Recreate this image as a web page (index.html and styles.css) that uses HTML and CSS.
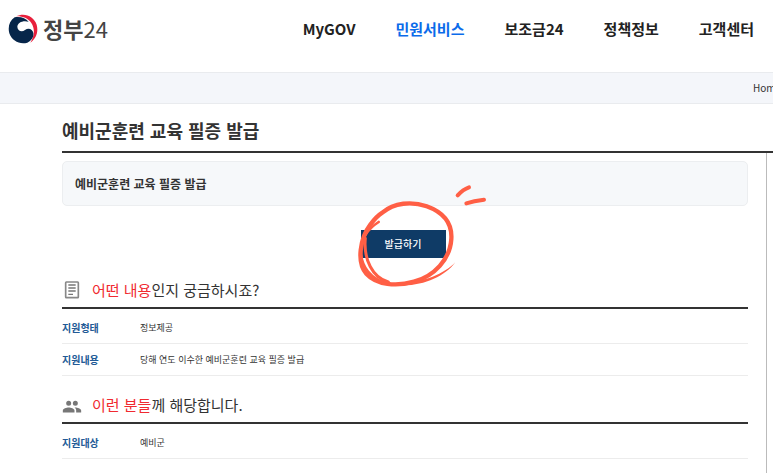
FILE: index.html
```html
<!DOCTYPE html>
<html lang="ko">
<head>
    <meta charset="UTF-8">
    <meta name="viewport" content="width=device-width, initial-scale=1.0">
    <title>예비군훈련 교육 필증 발급 | 정부24</title>
    <link rel="stylesheet" href="styles.css">
</head>
<body>
    <header class="header">
        <a href="#" class="logo">
            <svg class="logo-mark" viewBox="0 0 90 90" aria-hidden="true">
                <path fill="#e8203c" d="M24 7 C50 -6 78 7 86 32 C92 54 84 74 67 86 C79 68 82 45 70 27 C60 12 42 6 24 7Z"/>
                <path fill="#06264a" d="M20 10 C37 7 53 12 62 23 C45 18 29 25 28 38 C28 50 41 56 51 48 C61 40 74 45 76 57 C78 70 69 81 58 86 C36 93 12 81 4 58 C-1 39 4 21 20 10Z"/>
            </svg>
            <span><b>정부</b>24</span>
        </a>
        <nav class="menu">
            <a href="#">MyGOV</a>
            <a href="#" class="active">민원서비스</a>
            <a href="#">보조금24</a>
            <a href="#">정책정보</a>
            <a href="#">고객센터</a>
        </nav>
    </header>
    <div class="breadcrumb">
        <a href="#">Home</a>
    </div>
    <main class="page">
        <h1>예비군훈련 교육 필증 발급</h1>
        <div class="content">
            <div class="summary">예비군훈련 교육 필증 발급</div>
            <div class="action">
                <div class="action-target">
                    <button type="button">발급하기</button>
                    <svg class="marker" viewBox="0 0 480 375" aria-hidden="true">
                        <g fill="none" stroke="#ff5f45" stroke-linecap="round" stroke-linejoin="round">
                            <path stroke-width="13" d="M127 128 C162 98 215 93 260 109 C307 126 337 158 334 207 C330 268 283 318 222 335 C169 350 110 345 79 311 C49 277 60 205 91 164 C102 149 114 136 127 128"/>
                            <path stroke-width="8" d="M116 156 C83 177 65 207 63 239 C61 286 91 333 153 343"/>
                            <path stroke-width="9" d="M76 205 C70 268 98 324 145 336"/>
                            <path stroke-width="12" d="M353 76 C362 66 373 57 387 52"/>
                            <path stroke-width="12" d="M379 100 C397 94 415 91 432 89"/>
                        </g>
                        <path fill="#ff5f45" d="M346 277 C316 318 256 345 190 347 L188 338 C251 337 312 312 346 277Z"/>
                    </svg>
                </div>
            </div>
            <section>
                <h2>
                    <svg class="icon" viewBox="0 0 60 60" aria-hidden="true">
                        <rect x="11" y="6" width="38" height="47" rx="2" fill="none" stroke="#888" stroke-width="5"/>
                        <path fill="none" stroke="#777" stroke-width="4" d="M19 15H41M19 24H41M19 33H41M19 43H33"/>
                    </svg>
                    <span><em>어떤 내용</em>인지 궁금하시죠?</span>
                </h2>
                <table>
                    <tr>
                        <th scope="row">지원형태</th>
                        <td>정보제공</td>
                    </tr>
                    <tr>
                        <th scope="row">지원내용</th>
                        <td>당해 연도 이수한 예비군훈련 교육 필증 발급</td>
                    </tr>
                </table>
            </section>
            <section>
                <h2>
                    <svg class="icon" viewBox="0 0 24 24" aria-hidden="true">
                        <path fill="#777" d="M16 13a3 3 0 1 0 0-6 3 3 0 0 0 0 6zm-8 0a3 3 0 1 0 0-6 3 3 0 0 0 0 6zm0 2c-2.500 0-7 1.200-7 3.500V21h14v-2.500C15 16.200 10.500 15 8 15zm8 0-1 .1c1.200.8 2 2 2 3.400V21h6v-2.500c0-2.300-4.700-3.500-7-3.500z"/>
                    </svg>
                    <span><em>이런 분들</em>께 해당합니다.</span>
                </h2>
                <table>
                    <tr>
                        <th scope="row">지원대상</th>
                        <td>예비군</td>
                    </tr>
                </table>
            </section>
        </div>
    </main>
</body>
</html>
```
FILE: styles.css
```css
* {
    box-sizing: border-box;
}
body {
    margin: 0;
    min-height: 100vh;
    display: flex;
    flex-direction: column;
    font-family: "Noto Sans CJK KR", "Noto Sans", sans-serif;
    background-color: #fff;
    color: #333;
}
a {
    color: inherit;
    text-decoration: none;
}
.header {
    display: flex;
    align-items: center;
    justify-content: space-between;
    padding: 14px 19px 28px 8px;
}
.logo {
    display: flex;
    align-items: flex-start;
    gap: 5px;
    font-size: 22px;
    line-height: 28px;
    color: #444;
}
.logo-mark {
    width: 30px;
    height: 30px;
}
.menu {
    display: flex;
    gap: 40px;
    font-size: 15px;
    line-height: 30px;
    font-weight: 700;
    color: #222;
}
.menu .active {
    color: #0b6bea;
}
.breadcrumb {
    display: flex;
    justify-content: flex-end;
    border-top: 1px solid #e9ebee;
    border-bottom: 1px solid #e9ebee;
    background-color: #f4f6fa;
    font-size: 10px;
    line-height: 30px;
}
.breadcrumb a {
    width: 20px;
    overflow: hidden;
}
.page {
    flex: 1;
    display: flex;
    flex-direction: column;
    padding-left: 62px;
}
h1 {
    margin: 0;
    padding: 12px 0 6px;
    border-bottom: 2px solid #333;
    font-size: 18px;
    line-height: 29px;
    font-weight: 700;
}
.content {
    flex: 1;
    margin-right: 6px;
    padding: 8px 18px 0 0;
    border-right: 1px solid #bbb;
}
.summary {
    padding: 12px 12px 11px;
    border: 1px solid #eceef0;
    border-radius: 5px;
    background-color: #f6f8fa;
    font-size: 12px;
    line-height: 20px;
    font-weight: 700;
}
.action {
    display: flex;
    justify-content: center;
    padding: 24px 4px 17px 0;
}
.action-target {
    position: relative;
}
button {
    display: block;
    width: 85px;
    height: 28px;
    padding: 0 0 2px;
    border: none;
    background-color: #0f3b66;
    color: #fff;
    font-family: inherit;
    font-size: 10px;
    font-weight: 500;
    cursor: pointer;
}
.marker {
    position: absolute;
    left: -21px;
    top: -60px;
    width: 160px;
    height: 125px;
    pointer-events: none;
}
section {
    margin-bottom: 14px;
}
h2 {
    display: flex;
    align-items: center;
    gap: 10px;
    margin: 0;
    padding: 3px 0 5px;
    border-bottom: 2px solid #333;
    font-size: 15px;
    line-height: 24px;
    font-weight: 400;
}
h2 em {
    color: #f02a30;
    font-style: normal;
}
.icon {
    width: 20px;
    height: 20px;
}
table {
    width: 100%;
    margin-top: 3px;
    border-collapse: collapse;
    line-height: 16px;
    text-align: left;
}
th, td {
    padding: 8px 0 7px;
    border-bottom: 1px solid #ececec;
}
th {
    width: 78px;
    font-size: 10px;
    font-weight: 700;
    color: #225a96;
}
td {
    font-size: 9px;
}
```
